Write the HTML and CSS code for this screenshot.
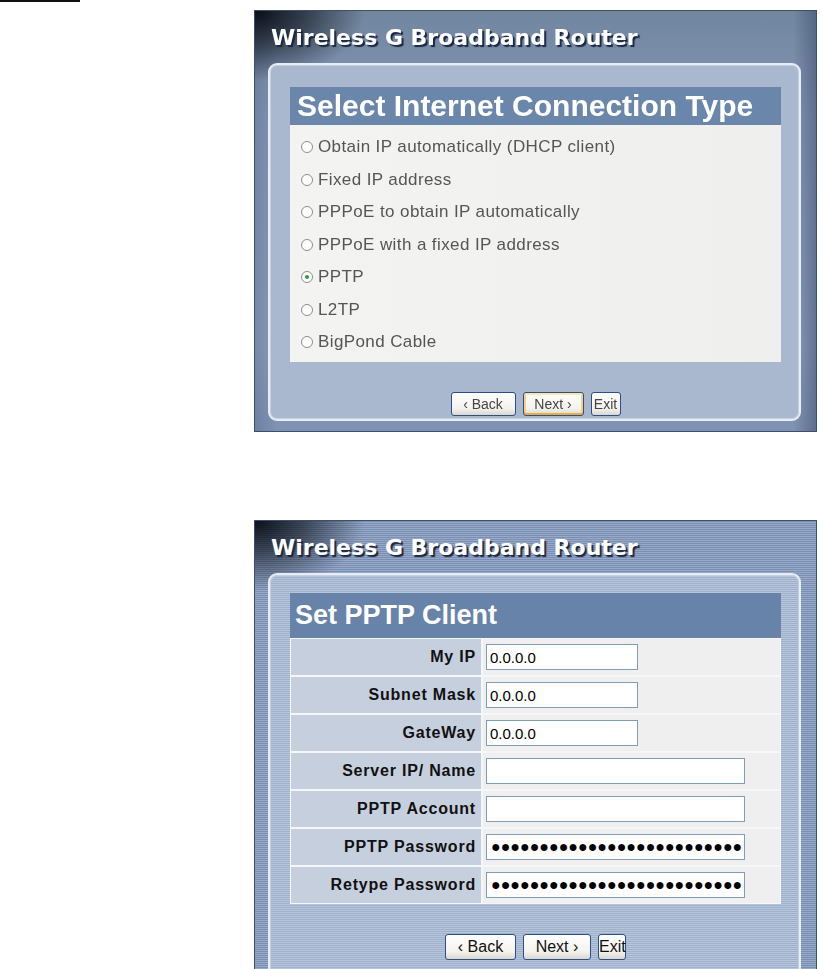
FILE: index.html
```html
<!DOCTYPE html>
<html lang="en">
<head>
<meta charset="utf-8">
<title>Wireless G Broadband Router</title>
<link rel="stylesheet" href="styles.css">
</head>
<body>
<div class="topline"></div>
<main class="page">
  <section class="win win-blur">
    <h1 class="brand">Wireless G Broadband Router</h1>
    <div class="frame">
      <div class="card">
        <h2 class="card-title">Select Internet Connection Type</h2>
        <ul class="options">
          <li><span class="radio"></span>Obtain IP automatically (DHCP client)</li>
          <li><span class="radio"></span>Fixed IP address</li>
          <li><span class="radio"></span>PPPoE to obtain IP automatically</li>
          <li><span class="radio"></span>PPPoE with a fixed IP address</li>
          <li><span class="radio on"></span>PPTP</li>
          <li><span class="radio"></span>L2TP</li>
          <li><span class="radio"></span>BigPond Cable</li>
        </ul>
      </div>
      <div class="actions">
        <button class="btn btn-back" type="button">&#8249; Back</button>
        <button class="btn btn-next focus" type="button">Next &#8250;</button>
        <button class="btn btn-exit" type="button">Exit</button>
      </div>
    </div>
  </section>

  <section class="win win-sharp">
    <h1 class="brand">Wireless G Broadband Router</h1>
    <div class="frame">
      <div class="card">
        <h2 class="card-title card-title-2">Set PPTP Client</h2>
        <div class="grid">
          <div class="label">My IP</div>
          <div class="value"><input class="field short" type="text" value="0.0.0.0"></div>
          <div class="label">Subnet Mask</div>
          <div class="value"><input class="field short" type="text" value="0.0.0.0"></div>
          <div class="label">GateWay</div>
          <div class="value"><input class="field short" type="text" value="0.0.0.0"></div>
          <div class="label">Server IP/ Name</div>
          <div class="value"><input class="field long" type="text" value=""></div>
          <div class="label">PPTP Account</div>
          <div class="value"><input class="field long" type="text" value=""></div>
          <div class="label">PPTP Password</div>
          <div class="value"><div class="field long dots">●●●●●●●●●●●●●●●●●●●●●●●●●●</div></div>
          <div class="label">Retype Password</div>
          <div class="value"><div class="field long dots">●●●●●●●●●●●●●●●●●●●●●●●●●●</div></div>
        </div>
      </div>
      <div class="actions actions-2">
        <button class="btn btn-back" type="button">&#8249; Back</button>
        <button class="btn btn-next" type="button">Next &#8250;</button>
        <button class="btn btn-exit" type="button">Exit</button>
      </div>
    </div>
  </section>
</main>
</body>
</html>
```

FILE: styles.css
```css
* { box-sizing: border-box; }
html, body { margin: 0; background: #fff; }
body {
  width: 822px;
  height: 969px;
  overflow: hidden;
  font-family: "Liberation Sans", Arial, sans-serif;
}
.topline { width: 80px; height: 2px; background: #111; }
.page {
  display: flex;
  flex-direction: column;
  gap: 88px;
  padding: 8px 0 0 254px;
}
.win {
  width: 563px;
  display: flex;
  flex-direction: column;
  padding: 0 15px 10px 13px;
  border: 1px solid #3f4e6c;
  overflow: hidden;
}
.win-blur {
  height: 422px;
  background:
    radial-gradient(ellipse 110px 70px at 0 0, rgba(8,12,20,.97) 0%, rgba(8,12,20,.6) 45%, rgba(8,12,20,0) 100%),
    linear-gradient(to right, rgba(60,75,105,.25), rgba(60,75,105,0) 4%, rgba(60,75,105,0) 96%, rgba(50,65,95,.45)),
    linear-gradient(#71869f, #8396b7 25%, #8b9dbd 80%, #7f92b3);
  filter: blur(0.5px);
}
.win-sharp {
  height: 470px;
  background:
    radial-gradient(ellipse 110px 70px at 0 0, rgba(8,12,20,.97) 0%, rgba(8,12,20,.6) 45%, rgba(8,12,20,0) 100%),
    repeating-linear-gradient(#7a8fb4 0 1px, #97a9c7 1px 2px);
}
.brand {
  margin: 0;
  height: 52px;
  padding: 14px 0 0 3px;
  font: bold 22px/26px "DejaVu Sans", sans-serif;
  color: #fff;
  text-shadow: 2px 2px 1px #1b2842;
}
.frame {
  flex: 1;
  display: flex;
  flex-direction: column;
  padding: 22px 18px 0 20px;
  border: 2px solid #e6edf5;
  border-radius: 9px;
  background: #a9b8cf;
  box-shadow: inset 0 0 0 1px #c3d0e1;
}
.win-sharp .frame {
  padding-top: 18px;
  background: repeating-linear-gradient(#a0b1cb 0 1px, #b7c5da 1px 2px);
}
.card-title {
  margin: 0;
  height: 38px;
  padding-left: 7px;
  background: #6b86ab;
  color: #fff;
  font: bold 30px/38px "Liberation Sans", Arial, sans-serif;
}
.card-title-2 {
  height: 45px;
  padding-left: 5px;
  background: #6883a9;
  font-size: 27px;
  line-height: 44px;
}
.options {
  list-style: none;
  margin: 0;
  padding: 6px 0 3px 11px;
  background: linear-gradient(to right, #f3f3f1, #efefed);
}
.options li {
  height: 32.5px;
  display: flex;
  align-items: center;
  gap: 5px;
  font-size: 17px;
  letter-spacing: 0.4px;
  color: #555;
}
.radio {
  position: relative;
  width: 12px;
  height: 12px;
  border: 1px solid #8a8d90;
  border-radius: 50%;
  background: #fff;
}
.radio.on::after {
  content: "";
  position: absolute;
  left: 3px;
  top: 3px;
  width: 4px;
  height: 4px;
  border-radius: 50%;
  background: #2f9a3a;
}
.actions {
  flex: 1;
  display: flex;
  justify-content: center;
  align-items: flex-start;
  gap: 7px;
  padding: 30px 0 0;
}
.btn {
  height: 24px;
  padding: 0;
  border: 1px solid #2a4f8c;
  border-radius: 3px;
  background: linear-gradient(#ffffff, #f3f2ed 70%, #dcd7cb);
  font: 14px "Liberation Sans", Arial, sans-serif;
  color: #444;
}
.btn.focus {
  box-shadow: inset 0 2px 0 #ffe7a8, inset 0 -2px 0 #ebab3f, inset 2px 0 0 #f9cf79, inset -2px 0 0 #f9cf79;
}
.btn-back { width: 65px; }
.btn-next { width: 61px; }
.btn-exit { width: 30px; }
.actions-2 .btn { height: 26px; font-size: 16px; color: #111; }
.actions-2 .btn-back { width: 71px; }
.actions-2 .btn-next { width: 68px; }
.actions-2 .btn-exit { width: 28px; }
.grid {
  display: grid;
  grid-template-columns: 190px 1fr;
  grid-auto-rows: 36px;
  gap: 2px;
  padding: 1px;
  background: #f6f7f9;
}
.label {
  display: flex;
  align-items: center;
  justify-content: flex-end;
  padding-right: 5px;
  background: #c6cfdd;
  font: bold 16px "Liberation Sans", Arial, sans-serif;
  letter-spacing: 0.8px;
  color: #111;
}
.value {
  display: flex;
  align-items: center;
  padding-left: 3px;
  background: #efefef;
}
.field {
  height: 26px;
  margin: 0;
  padding: 0 3px;
  border: 1px solid #7f9db9;
  background: #fff;
  font: 15px "Liberation Sans", Arial, sans-serif;
  color: #000;
  outline: none;
}
.field.short { width: 152px; }
.field.long { width: 259px; }
.dots {
  display: flex;
  align-items: center;
  overflow: hidden;
  white-space: nowrap;
  font-size: 16px;
  letter-spacing: 0;
  padding-left: 4px;
}
```
